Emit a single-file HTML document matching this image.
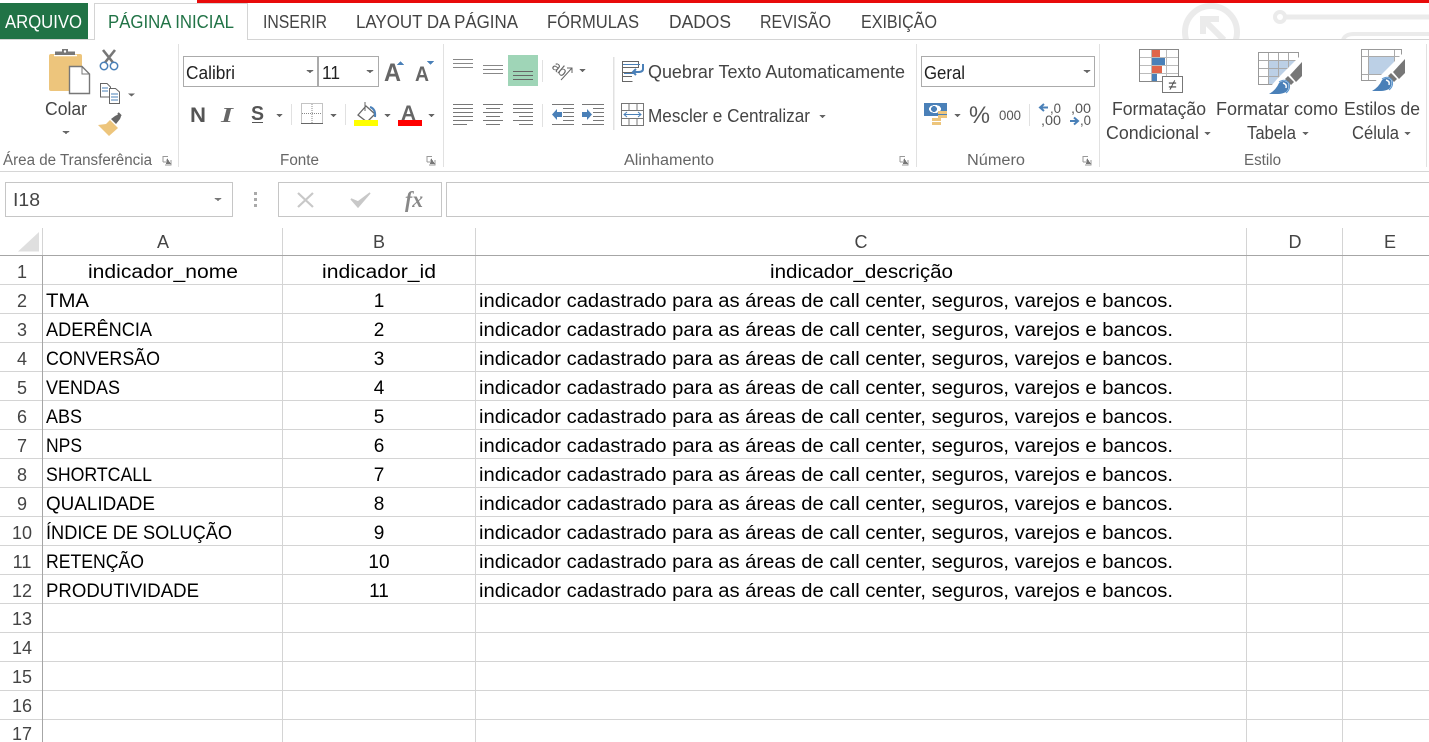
<!DOCTYPE html>
<html><head><meta charset="utf-8"><style>
html,body{margin:0;padding:0;background:#fff;overflow:hidden}
svg{display:block;font-family:"Liberation Sans",sans-serif}
.t{font-size:18px;fill:#444}
.r{font-size:18px;fill:#444}
.g{font-size:15.5px;fill:#666}
.c{font-size:19px;fill:#000}
.h{font-size:18px;fill:#444;text-anchor:middle}
.l{stroke:#d4d4d4;stroke-width:1;fill:none}
.b{fill:#4a80b8}
.d{fill:#666}
</style></head><body>
<svg width="1429" height="742" viewBox="0 0 1429 742" xmlns="http://www.w3.org/2000/svg" shape-rendering="crispEdges">
<rect width="1429" height="742" fill="#fff"/>
<!-- watermark -->
<g shape-rendering="auto" fill="none" stroke="#ebebeb" stroke-width="6">
<circle cx="1211" cy="32" r="26"/>
<path d="M1203 34V19H1219M1204 20L1224 40"/>
<circle cx="1280" cy="17" r="5" stroke-width="4"/>
<path d="M1286 17H1429" stroke-width="5"/>
<path d="M1343 40Q1345 34 1354 34H1429" stroke-width="4"/>
</g>
<rect x="1100" y="39" width="329" height="133" fill="#fff"/>
<!-- top -->
<rect x="197" y="0" width="1232" height="3" fill="#e80a0a"/>
<rect x="0" y="3" width="88" height="37" fill="#217346"/>
<path d="M0 39.5H94M247 39.5H1429" class="l"/>
<path d="M94.5 40V3.5H247.5V40" class="l"/>
<text x="5" y="28" font-size="18" fill="#fff" textLength="77" lengthAdjust="spacingAndGlyphs">ARQUIVO</text>
<text x="108" y="28" class="t" style="fill:#217346" textLength="126" lengthAdjust="spacingAndGlyphs">PÁGINA INICIAL</text>
<text x="263" y="28" class="t" textLength="64" lengthAdjust="spacingAndGlyphs">INSERIR</text>
<text x="356" y="28" class="t" textLength="162" lengthAdjust="spacingAndGlyphs">LAYOUT DA PÁGINA</text>
<text x="547" y="28" class="t" textLength="92" lengthAdjust="spacingAndGlyphs">FÓRMULAS</text>
<text x="669" y="28" class="t" textLength="62" lengthAdjust="spacingAndGlyphs">DADOS</text>
<text x="760" y="28" class="t" textLength="71" lengthAdjust="spacingAndGlyphs">REVISÃO</text>
<text x="861" y="28" class="t" textLength="76" lengthAdjust="spacingAndGlyphs">EXIBIÇÃO</text>
<!-- ribbon separators -->
<path d="M178.5 44V167M443.5 44V167M916.5 44V167M1099.5 44V167M1426.5 44V167" stroke="#e1e1e1" fill="none"/>
<path d="M0 171.5H1429" stroke="#d6d6d6" fill="none"/>
<!-- clipboard -->
<g shape-rendering="auto">
<rect x="49" y="54" width="33" height="37" rx="2" fill="#edc57c"/>
<path d="M54 55.500H77" stroke="#fff" stroke-width="1.500" fill="none"/>
<path d="M55 55V51.500H62V49H68V51.500H75V55Z" fill="#777"/>
<circle cx="65" cy="51.500" r="1.200" fill="#fff"/>
<path d="M69.500 66.500H82L89.500 74V93.500H69.500Z" fill="#fff" stroke="#777" stroke-width="1.400"/>
<path d="M82 66.500V74H89.500" fill="none" stroke="#777"/>
<path d="M103 50L115 65M115 50L103 65" stroke="#777" stroke-width="2.600" fill="none"/>
<circle cx="104" cy="66" r="3.700" fill="#fff" stroke="#4a80b8" stroke-width="1.500"/>
<circle cx="114" cy="66" r="3.700" fill="#fff" stroke="#4a80b8" stroke-width="1.500"/>
<path d="M100.500 83.500H107L110.500 87V97H100.500Z" fill="#fff" stroke="#666"/>
<path d="M109.500 88.500H115.500L119.500 92V103.500H109.500Z" fill="#fff" stroke="#666"/>
<path d="M102 88H108M102 91H108M111 94H118M111 97H118M111 100H118" stroke="#4a80b8" fill="none"/>
<path d="M128 93.500H135L131.500 96.500Z" class="d"/>
<path d="M98 125L106 124L110 120L118 128L109 136Z" fill="#edc57c"/>
<path d="M111 119L115 116L119 114L121 116.500L120 119L116 124Z" fill="#666"/>
<path d="M118 113L121 116" stroke="#666" stroke-width="2" fill="none"/>
</g>
<text x="45" y="115" class="r" textLength="42" lengthAdjust="spacingAndGlyphs">Colar</text>
<path d="M62 131H70L66 134Z" class="d"/>
<text x="3" y="165" class="g" textLength="149" lengthAdjust="spacingAndGlyphs">Área de Transferência</text>
<g id="launch"><path d="M163 156.500H168M163 156V162M163 162H166M171 160V165H165" stroke="#999" fill="none"/><path d="M167 158L171 164H166Z" fill="#777"/></g>
<!-- font -->
<rect x="183.500" y="56.500" width="134" height="30" fill="#fff" stroke="#ababab"/>
<rect x="318.500" y="56.500" width="60" height="30" fill="#fff" stroke="#ababab"/>
<text x="186" y="79" font-size="18" fill="#222" textLength="49" lengthAdjust="spacingAndGlyphs">Calibri</text>
<text x="322" y="79" font-size="18" fill="#222" textLength="18" lengthAdjust="spacingAndGlyphs">11</text>
<path d="M306 70H314L310 73ZM366 70H374L370 73Z" class="d"/>
<text x="384" y="81" font-size="25" font-weight="bold" fill="#666" textLength="17" lengthAdjust="spacingAndGlyphs">A</text>
<path d="M397 65H404L400.500 61Z" class="b"/>
<text x="415" y="81" font-size="21" font-weight="bold" fill="#666" textLength="14" lengthAdjust="spacingAndGlyphs">A</text>
<path d="M427 61H434L430.500 65Z" class="b"/>
<text x="190" y="122" font-size="21" font-weight="bold" fill="#555" textLength="16" lengthAdjust="spacingAndGlyphs">N</text>
<text x="221" y="122" font-size="21" font-style="italic" font-weight="bold" font-family="Liberation Serif" fill="#666" textLength="12" lengthAdjust="spacingAndGlyphs">I</text>
<text x="251" y="120" font-size="20" font-weight="bold" fill="#555" textLength="13" lengthAdjust="spacingAndGlyphs">S</text>
<path d="M252 122.500H263" stroke="#555" fill="none"/>
<path d="M276 114H283L279.500 117ZM330 114H337L333.500 117ZM384 114H391L387.500 117ZM428 114H435L431.500 117Z" class="d"/>
<path d="M291.500 104V125M345.500 104V125" stroke="#e1e1e1" fill="none"/>
<path d="M301.500 103.500H322.500V123.500H301.500ZM312 104V123M302 113.500H322" stroke="#888" stroke-dasharray="1 1" fill="none"/>
<path d="M301 123.500H323" stroke="#666" fill="none"/>
<g shape-rendering="auto">
<path d="M358 115L366 106L375 114L367 122Z" fill="#fff" stroke="#666" stroke-width="1.300"/>
<path d="M365 102V111" stroke="#666" fill="none"/>
<path d="M370 107Q376 109 375 117" stroke="#4a80b8" stroke-width="2" fill="none"/>
</g>
<rect x="354" y="120" width="24" height="6" fill="#ffff00"/>
<text x="401" y="120" font-size="21" font-weight="bold" fill="#666" textLength="15" lengthAdjust="spacingAndGlyphs">A</text>
<rect x="398" y="120" width="24" height="6" fill="#f00"/>
<text x="280" y="165" class="g" textLength="39" lengthAdjust="spacingAndGlyphs">Fonte</text>
<use href="#launch" x="264"/>
<!-- alignment -->
<rect x="508" y="55" width="30" height="31" fill="#9fd5b7"/>
<path d="M453 59.500H473M453 63.500H473M453 67.500H473" stroke="#888" fill="none"/>
<path d="M483 65.500H503M483 69.500H503M483 73.500H503" stroke="#888" fill="none"/>
<path d="M513 71.500H533M513 75.500H533M513 79.500H533" stroke="#666" fill="none"/>
<path d="M542.500 60V82M542.500 104V127" stroke="#e1e1e1" fill="none"/>
<g shape-rendering="auto">
<text x="552" y="73" font-size="14" fill="#666" transform="rotate(40 559 69)" textLength="15" lengthAdjust="spacingAndGlyphs">ab</text>
<path d="M561 80L572 68M567 68H572V73" stroke="#666" fill="none"/>
</g>
<path d="M579 69H586L582.500 72Z" class="d"/>
<path d="M613.500 57V130" stroke="#e1e1e1" stroke-width="1.500" fill="none"/>
<path d="M453 104.500H473M453 108.500H473M453 112.500H473M453 116.500H473M453 120.500H473M453 124.500H467" stroke="#777" fill="none"/>
<path d="M483 104.500H503M486 108.500H500M483 112.500H503M486 116.500H500M483 120.500H503M486 124.500H500" stroke="#777" fill="none"/>
<path d="M513 104.500H533M513 108.500H533M513 112.500H533M519 116.500H533M513 120.500H533M519 124.500H533" stroke="#777" fill="none"/>
<path d="M552 104.500H574M563 108.500H574M563 112.500H574M563 116.500H574M563 120.500H574M552 124.500H574" stroke="#777" fill="none"/>
<path d="M582 104.500H604M593 108.500H604M593 112.500H604M593 116.500H604M593 120.500H604M582 124.500H604" stroke="#777" fill="none"/>
<path d="M552 114.500L557 109V112H562V117H557V120Z" class="b" shape-rendering="auto"/>
<path d="M592 114.500L587 109V112H582V117H587V120Z" class="b" shape-rendering="auto"/>
<path d="M622.500 61.500H638.500V67.500H622.500ZM622.500 67.500V81.500H632.500M622.500 72.500H635M622.500 76.500H632" stroke="#666" fill="none"/>
<path d="M623 64.500H640M624 73.500H634" stroke="#4a80b8" fill="none"/>
<path d="M643 64V69Q643 72 638 72H633M636 69L633 72L636 75" stroke="#4a80b8" stroke-width="2" fill="none" shape-rendering="auto"/>
<text x="648" y="78" class="r" textLength="257" lengthAdjust="spacingAndGlyphs">Quebrar Texto Automaticamente</text>
<path d="M621.500 103.500H643.500V125.500H621.500ZM622 110.500H643M622 118.500H643M629 104V110M637 104V110M629 119V125M637 119V125" stroke="#777" fill="none"/>
<path d="M624 114.500H641M627 112L624 114.500L627 117M638 112L641 114.500L638 117" stroke="#4a80b8" fill="none" shape-rendering="auto"/>
<text x="648" y="122" class="r" textLength="162" lengthAdjust="spacingAndGlyphs">Mescler e Centralizar</text>
<path d="M819 115H826L822.500 118Z" class="d"/>
<text x="624" y="165" class="g" textLength="90" lengthAdjust="spacingAndGlyphs">Alinhamento</text>
<use href="#launch" x="737"/>
<!-- number -->
<rect x="921.500" y="56.500" width="173" height="30" fill="#fff" stroke="#ababab"/>
<text x="924" y="79" font-size="18" fill="#222" textLength="41" lengthAdjust="spacingAndGlyphs">Geral</text>
<path d="M1083 70H1091L1087 73Z" class="d"/>
<rect x="924" y="103" width="23" height="13" fill="#4a80b8"/>
<ellipse cx="935" cy="109" rx="6" ry="4" fill="#fff"/>
<circle cx="934" cy="109" r="3" fill="#4a80b8"/>
<g fill="#edc57c"><rect x="938" y="111" width="9" height="3"/><rect x="938" y="115" width="9" height="3"/><rect x="932" y="118" width="9" height="3"/><rect x="932" y="122" width="9" height="3"/></g>
<path d="M954 114H961L957.500 117Z" class="d"/>
<text x="969" y="123" font-size="24" fill="#555" textLength="21" lengthAdjust="spacingAndGlyphs">%</text>
<text x="999" y="120" font-size="14" fill="#555" textLength="22" lengthAdjust="spacingAndGlyphs">000</text>
<path d="M1029.500 104V126" stroke="#e1e1e1" fill="none"/>
<text x="1050" y="113" font-size="14" fill="#555" textLength="11" lengthAdjust="spacingAndGlyphs">,0</text>
<text x="1041" y="125" font-size="14" fill="#555" textLength="20" lengthAdjust="spacingAndGlyphs">,00</text>
<text x="1071" y="113" font-size="14" fill="#555" textLength="20" lengthAdjust="spacingAndGlyphs">,00</text>
<text x="1080" y="125" font-size="14" fill="#555" textLength="11" lengthAdjust="spacingAndGlyphs">,0</text>
<path d="M1048 107.500H1040M1044 104L1040 107.500L1044 111" stroke="#4a80b8" stroke-width="2" fill="none" shape-rendering="auto"/>
<path d="M1070 121H1078M1074 117.500L1078 121L1074 124.500" stroke="#4a80b8" stroke-width="2" fill="none" shape-rendering="auto"/>
<text x="967" y="165" class="g" textLength="58" lengthAdjust="spacingAndGlyphs">Número</text>
<use href="#launch" x="920"/>
<!-- styles -->
<g>
<rect x="1139.500" y="49.500" width="39" height="32" fill="#fff" stroke="#888"/>
<path d="M1140 57.500H1178M1140 65.500H1178M1140 73.500H1178M1151.500 50V81M1166.500 50V81" stroke="#bbb" fill="none"/>
<rect x="1152" y="50" width="8" height="7" fill="#e0654a"/>
<rect x="1152" y="58" width="13" height="7" fill="#4a80b8"/>
<rect x="1152" y="66" width="10" height="7" fill="#e0654a"/>
<rect x="1152" y="74" width="5" height="7" fill="#4a80b8"/>
<rect x="1162.500" y="76.500" width="20" height="16" fill="#fff" stroke="#777"/>
<text x="1172.500" y="90" font-size="15" fill="#444" text-anchor="middle">≠</text>
</g>
<g>
<rect x="1258.500" y="52.500" width="40" height="32" fill="#fff" stroke="#999"/>
<rect x="1269" y="60" width="29" height="24" fill="#bcd0e6"/>
<path d="M1259 60.500H1298M1259 68.500H1298M1259 76.500H1298M1268.500 53V84M1278.500 53V84M1288.500 53V84" stroke="#aaa" fill="none"/>
</g>
<g>
<rect x="1361.500" y="49.500" width="40" height="31" fill="#fff" stroke="#999"/>
<rect x="1369" y="56" width="26" height="19" fill="#bcd0e6"/>
<path d="M1362 56.500H1401M1362 74.500H1401M1368.500 50V80M1394.500 50V80" stroke="#aaa" fill="none"/>
</g>
<g id="brush" shape-rendering="auto">
<path d="M1300 56L1306 62V76L1294 94H1264L1278 78Z" fill="#fff"/>
<path d="M1302 62V76L1296 82L1290 75Z" fill="#777"/>
<path d="M1288 76L1294 82L1291 85L1285 79Z" fill="#777"/>
<path d="M1269 94Q1276 90 1279 83Q1284 79 1288 83Q1290 88 1286 92Q1282 94 1278 94Z" fill="#4a80b8"/>
<path d="M1283 83Q1287 84 1286 88" stroke="#fff" stroke-width="1.500" fill="none"/>
<path d="M1279 82Q1285 78 1289 83Q1291 89 1286 93" stroke="#5d97d0" fill="none"/>
</g>
<use href="#brush" x="103" y="-3"/>
<text x="1112" y="115" class="r" textLength="94" lengthAdjust="spacingAndGlyphs">Formatação</text>
<text x="1106" y="139" class="r" textLength="93" lengthAdjust="spacingAndGlyphs">Condicional</text>
<path d="M1204 132H1211L1207.500 135Z" class="d"/>
<text x="1216" y="115" class="r" textLength="122" lengthAdjust="spacingAndGlyphs">Formatar como</text>
<text x="1247" y="139" class="r" textLength="49" lengthAdjust="spacingAndGlyphs">Tabela</text>
<path d="M1302 132H1309L1305.500 135Z" class="d"/>
<text x="1344" y="115" class="r" textLength="76" lengthAdjust="spacingAndGlyphs">Estilos de</text>
<text x="1352" y="139" class="r" textLength="47" lengthAdjust="spacingAndGlyphs">Célula</text>
<path d="M1404 132H1411L1407.500 135Z" class="d"/>
<text x="1244" y="165" class="g" textLength="37" lengthAdjust="spacingAndGlyphs">Estilo</text>
<!-- formula bar -->
<rect x="5.500" y="182.500" width="227" height="34" fill="#fff" stroke="#c6c6c6"/>
<text x="13" y="206" font-size="18" fill="#444" textLength="27" lengthAdjust="spacingAndGlyphs">I18</text>
<path d="M214 198H222L218 201Z" fill="#777"/>
<path d="M254 192h3v3h-3zM254 198h3v3h-3zM254 204h3v3h-3z" fill="#aaa"/>
<rect x="278.500" y="182.500" width="163" height="34" fill="#fff" stroke="#c6c6c6"/>
<rect x="446.500" y="182.500" width="990" height="34" fill="#fff" stroke="#c6c6c6"/>
<g shape-rendering="auto">
<path d="M298 193L313 207M313 193L298 207" stroke="#c8c8c8" stroke-width="2.200" fill="none"/>
<path d="M351 199L358 207L370 193L358 202Z" fill="#c8c8c8" stroke="#c8c8c8" stroke-width="1.500"/>
</g>
<text x="405" y="207" font-family="Liberation Serif" font-style="italic" font-weight="bold" font-size="23" fill="#888" textLength="18" lengthAdjust="spacingAndGlyphs">fx</text>
<!-- grid -->
<g stroke="#d4d4d4" fill="none">
<path d="M0 284.500H1429M0 313.500H1429M0 342.500H1429M0 371.500H1429M0 400.500H1429M0 429.500H1429M0 458.500H1429M0 487.500H1429M0 516.500H1429M0 545.500H1429M0 574.500H1429M0 603.500H1429M0 632.500H1429M0 661.500H1429M0 690.500H1429M0 719.500H1429"/>
<path d="M42.500 228V255M282.500 228V742M475.500 228V742M1246.500 228V742M1342.500 228V742"/>
</g>
<path d="M0 255.500H1429M42.500 255V742" stroke="#a6a6a6" fill="none"/>
<path d="M18 251.500L39 232V251.500Z" fill="#dfdfdf" shape-rendering="auto"/>
<text x="163" y="248" class="h">A</text>
<text x="379" y="248" class="h">B</text>
<text x="861" y="248" class="h">C</text>
<text x="1295" y="248" class="h">D</text>
<text x="1390" y="248" class="h">E</text>
<text x="22" y="278" class="h">1</text><text x="22" y="307" class="h">2</text><text x="22" y="336" class="h">3</text><text x="22" y="365" class="h">4</text><text x="22" y="394" class="h">5</text><text x="22" y="423" class="h">6</text><text x="22" y="452" class="h">7</text><text x="22" y="481" class="h">8</text><text x="22" y="510" class="h">9</text><text x="22" y="539" class="h">10</text><text x="22" y="568" class="h">11</text><text x="22" y="597" class="h">12</text><text x="22" y="625" class="h">13</text><text x="22" y="654" class="h">14</text><text x="22" y="683" class="h">15</text><text x="22" y="712" class="h">16</text><text x="22" y="740" class="h">17</text>
<text x="88" y="278" class="c" textLength="150" lengthAdjust="spacingAndGlyphs">indicador_nome</text>
<text x="322" y="278" class="c" textLength="114" lengthAdjust="spacingAndGlyphs">indicador_id</text>
<text x="770" y="278" class="c" textLength="183" lengthAdjust="spacingAndGlyphs">indicador_descrição</text>
<text x="46" y="307" class="c" textLength="43" lengthAdjust="spacingAndGlyphs">TMA</text>
<text x="46" y="336" class="c" textLength="106" lengthAdjust="spacingAndGlyphs">ADERÊNCIA</text>
<text x="46" y="365" class="c" textLength="114" lengthAdjust="spacingAndGlyphs">CONVERSÃO</text>
<text x="46" y="394" class="c" textLength="74" lengthAdjust="spacingAndGlyphs">VENDAS</text>
<text x="46" y="423" class="c" textLength="36" lengthAdjust="spacingAndGlyphs">ABS</text>
<text x="46" y="452" class="c" textLength="36" lengthAdjust="spacingAndGlyphs">NPS</text>
<text x="46" y="481" class="c" textLength="106" lengthAdjust="spacingAndGlyphs">SHORTCALL</text>
<text x="46" y="510" class="c" textLength="109" lengthAdjust="spacingAndGlyphs">QUALIDADE</text>
<text x="46" y="539" class="c" textLength="186" lengthAdjust="spacingAndGlyphs">ÍNDICE DE SOLUÇÃO</text>
<text x="46" y="568" class="c" textLength="98" lengthAdjust="spacingAndGlyphs">RETENÇÃO</text>
<text x="46" y="597" class="c" textLength="153" lengthAdjust="spacingAndGlyphs">PRODUTIVIDADE</text>
<g style="text-anchor:middle" font-size="19" fill="#000">
<text x="379" y="307">1</text><text x="379" y="336">2</text><text x="379" y="365">3</text><text x="379" y="394">4</text><text x="379" y="423">5</text><text x="379" y="452">6</text><text x="379" y="481">7</text><text x="379" y="510">8</text><text x="379" y="539">9</text><text x="379" y="568">10</text><text x="379" y="597">11</text>
</g>
<text x="479" y="307" class="c" textLength="694" lengthAdjust="spacingAndGlyphs">indicador cadastrado para as áreas de call center, seguros, varejos e bancos.</text>
<text x="479" y="336" class="c" textLength="694" lengthAdjust="spacingAndGlyphs">indicador cadastrado para as áreas de call center, seguros, varejos e bancos.</text>
<text x="479" y="365" class="c" textLength="694" lengthAdjust="spacingAndGlyphs">indicador cadastrado para as áreas de call center, seguros, varejos e bancos.</text>
<text x="479" y="394" class="c" textLength="694" lengthAdjust="spacingAndGlyphs">indicador cadastrado para as áreas de call center, seguros, varejos e bancos.</text>
<text x="479" y="423" class="c" textLength="694" lengthAdjust="spacingAndGlyphs">indicador cadastrado para as áreas de call center, seguros, varejos e bancos.</text>
<text x="479" y="452" class="c" textLength="694" lengthAdjust="spacingAndGlyphs">indicador cadastrado para as áreas de call center, seguros, varejos e bancos.</text>
<text x="479" y="481" class="c" textLength="694" lengthAdjust="spacingAndGlyphs">indicador cadastrado para as áreas de call center, seguros, varejos e bancos.</text>
<text x="479" y="510" class="c" textLength="694" lengthAdjust="spacingAndGlyphs">indicador cadastrado para as áreas de call center, seguros, varejos e bancos.</text>
<text x="479" y="539" class="c" textLength="694" lengthAdjust="spacingAndGlyphs">indicador cadastrado para as áreas de call center, seguros, varejos e bancos.</text>
<text x="479" y="568" class="c" textLength="694" lengthAdjust="spacingAndGlyphs">indicador cadastrado para as áreas de call center, seguros, varejos e bancos.</text>
<text x="479" y="597" class="c" textLength="694" lengthAdjust="spacingAndGlyphs">indicador cadastrado para as áreas de call center, seguros, varejos e bancos.</text>
</svg>
</body></html>
